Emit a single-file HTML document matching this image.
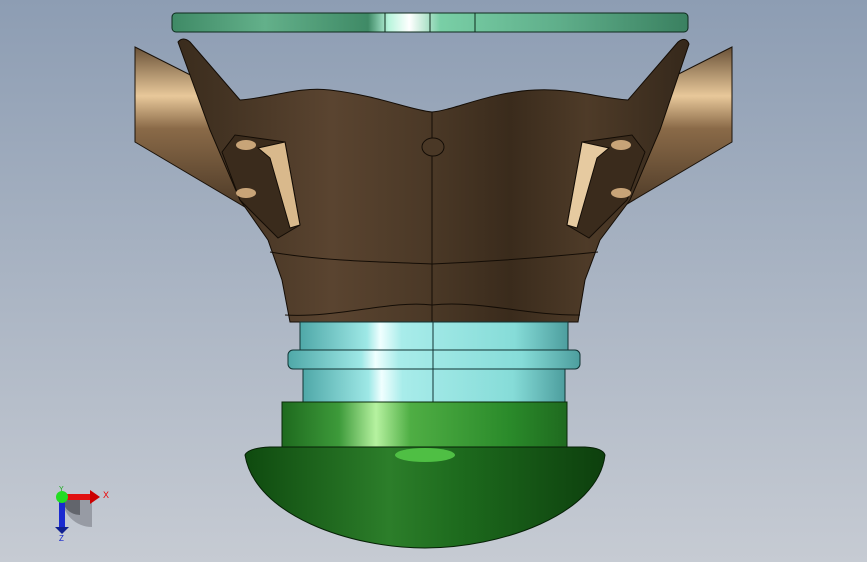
<!DOCTYPE html>
<html><head><style>html,body{margin:0;padding:0}body{width:867px;height:562px;overflow:hidden}</style></head>
<body>
<svg width="867" height="562" viewBox="0 0 867 562" xmlns="http://www.w3.org/2000/svg">
<defs>
<linearGradient id="bg" x1="0" y1="0" x2="0" y2="1"><stop offset="0" stop-color="#8d9db3"/><stop offset="1" stop-color="#c6cbd3"/></linearGradient>
<linearGradient id="disc" x1="0" y1="0" x2="1" y2="0"><stop offset="0" stop-color="#3f8a66"/><stop offset=".18" stop-color="#63b08a"/><stop offset=".38" stop-color="#3f8a66"/><stop offset=".42" stop-color="#b8f5dc"/><stop offset=".46" stop-color="#ffffff"/><stop offset=".52" stop-color="#79cfa6"/><stop offset=".75" stop-color="#5fae8a"/><stop offset="1" stop-color="#3a8060"/></linearGradient>
<linearGradient id="body" x1="0" y1="0" x2="1" y2="0"><stop offset="0" stop-color="#3a2c1d"/><stop offset=".3" stop-color="#5a4430"/><stop offset=".5" stop-color="#4a3826"/><stop offset=".65" stop-color="#3a2b1c"/><stop offset=".8" stop-color="#4e3b28"/><stop offset="1" stop-color="#35281b"/></linearGradient>
<linearGradient id="tubeL" x1="0" y1="0" x2="0" y2="1"><stop offset="0" stop-color="#6a5238"/><stop offset=".3" stop-color="#e8c89a"/><stop offset=".5" stop-color="#8a6a48"/><stop offset="1" stop-color="#4a3826"/></linearGradient>
<linearGradient id="cyan" x1="0" y1="0" x2="1" y2="0"><stop offset="0" stop-color="#4fa8a8"/><stop offset=".25" stop-color="#9ee8e6"/><stop offset=".3" stop-color="#f0ffff"/><stop offset=".38" stop-color="#a8ecea"/><stop offset=".8" stop-color="#86dcd8"/><stop offset="1" stop-color="#4d9e9e"/></linearGradient>
<linearGradient id="green" x1="0" y1="0" x2="1" y2="0"><stop offset="0" stop-color="#1e6a1e"/><stop offset=".2" stop-color="#3d9a3a"/><stop offset=".33" stop-color="#b6f2a0"/><stop offset=".45" stop-color="#4fae44"/><stop offset=".8" stop-color="#2a8a2a"/><stop offset="1" stop-color="#1f6a1f"/></linearGradient>
<linearGradient id="dome" x1="0" y1="0" x2="1" y2="0"><stop offset="0" stop-color="#0f4a0f"/><stop offset=".4" stop-color="#2c7e2a"/><stop offset=".6" stop-color="#1d6a1d"/><stop offset="1" stop-color="#0d3f0d"/></linearGradient>
</defs>
<rect width="867" height="562" fill="url(#bg)"/>
<rect x="172" y="13" width="516" height="19" rx="4" fill="url(#disc)" stroke="#0d2a1c" stroke-width="1"/>
<line x1="385" y1="13" x2="385" y2="32" stroke="#0d2a1c"/><line x1="430" y1="13" x2="430" y2="32" stroke="#0d2a1c"/><line x1="475" y1="13" x2="475" y2="32" stroke="#0d2a1c"/>
<polygon points="135,47 230,95 250,210 135,142" fill="url(#tubeL)" stroke="#1a120a"/>
<polygon points="732,47 637,95 617,210 732,142" fill="url(#tubeL)" stroke="#1a120a"/>
<path d="M178,42 Q183,36 190,42 L240,100 C270,98 300,86 330,90 C380,96 410,110 432,112 C455,110 490,92 535,90 C570,88 600,98 628,100 L678,42 Q686,36 689,44 L660,130 L630,200 L600,240 L585,280 L578,322 L290,322 L282,280 L268,240 L240,200 L210,130 Z" fill="url(#body)" stroke="#140d06"/>
<path d="M270,252 C330,262 390,262 432,264 C480,262 540,258 598,252" fill="none" stroke="#140d06"/>
<path d="M285,315 C340,318 390,300 432,305 C480,300 530,316 580,315" fill="none" stroke="#140d06"/>
<line x1="432" y1="112" x2="432" y2="322" stroke="#140d06"/>
<ellipse cx="433" cy="147" rx="11" ry="9" fill="#4a3826" stroke="#140d06"/>
<path d="M222,152 L235,135 L285,142 L300,225 L278,238 L240,200 Z" fill="#3a2b1c" stroke="#140d06"/>
<path d="M258,148 L285,142 L300,225 L290,228 L270,158 Z" fill="#d9b98c" stroke="#140d06"/>
<ellipse cx="246" cy="145" rx="10" ry="5" fill="#c8a478"/><ellipse cx="246" cy="193" rx="10" ry="5" fill="#c8a478"/>
<path d="M645,152 L632,135 L582,142 L567,225 L589,238 L627,200 Z" fill="#3a2b1c" stroke="#140d06"/>
<path d="M609,148 L582,142 L567,225 L577,228 L597,158 Z" fill="#e6caa0" stroke="#140d06"/>
<ellipse cx="621" cy="145" rx="10" ry="5" fill="#c8a478"/><ellipse cx="621" cy="193" rx="10" ry="5" fill="#c8a478"/>
<rect x="300" y="322" width="268" height="29" fill="url(#cyan)" stroke="#133"/>
<rect x="288" y="350" width="292" height="19" rx="5" fill="url(#cyan)" stroke="#133"/>
<rect x="303" y="369" width="262" height="33" fill="url(#cyan)" stroke="#133"/>
<line x1="433" y1="322" x2="433" y2="402" stroke="#133"/>
<rect x="282" y="402" width="285" height="48" fill="url(#green)" stroke="#0a2a0a"/>
<path d="M245,455 Q248,448 270,447 L585,447 Q603,448 605,455 C598,515 500,548 425,548 C350,548 255,515 245,455 Z" fill="url(#dome)" stroke="#062006"/>
<ellipse cx="425" cy="455" rx="30" ry="7" fill="#4fbf44"/>
<path d="M62,497 A30,30 0 0 0 92,527 L92,497 Z" fill="#8c9098" opacity=".8"/>
<path d="M62,497 A18,18 0 0 0 80,515 L80,497 Z" fill="#55585e" opacity=".8"/>
<rect x="62" y="494" width="30" height="6" fill="#e01010"/><polygon points="90,490 100,497 90,504" fill="#c00"/>
<rect x="59" y="497" width="6" height="30" fill="#1a2ad0"/><polygon points="55,527 69,527 62,534" fill="#102090"/>
<circle cx="62" cy="497" r="6" fill="#22dd22"/>
<text x="103" y="498" font-family="Liberation Sans,sans-serif" font-size="9" fill="#e00">X</text>
<text x="59" y="541" font-family="Liberation Sans,sans-serif" font-size="8" fill="#12c">Z</text>
<text x="59" y="491" font-family="Liberation Sans,sans-serif" font-size="7" fill="#1a1">Y</text>
</svg>
</body></html>
